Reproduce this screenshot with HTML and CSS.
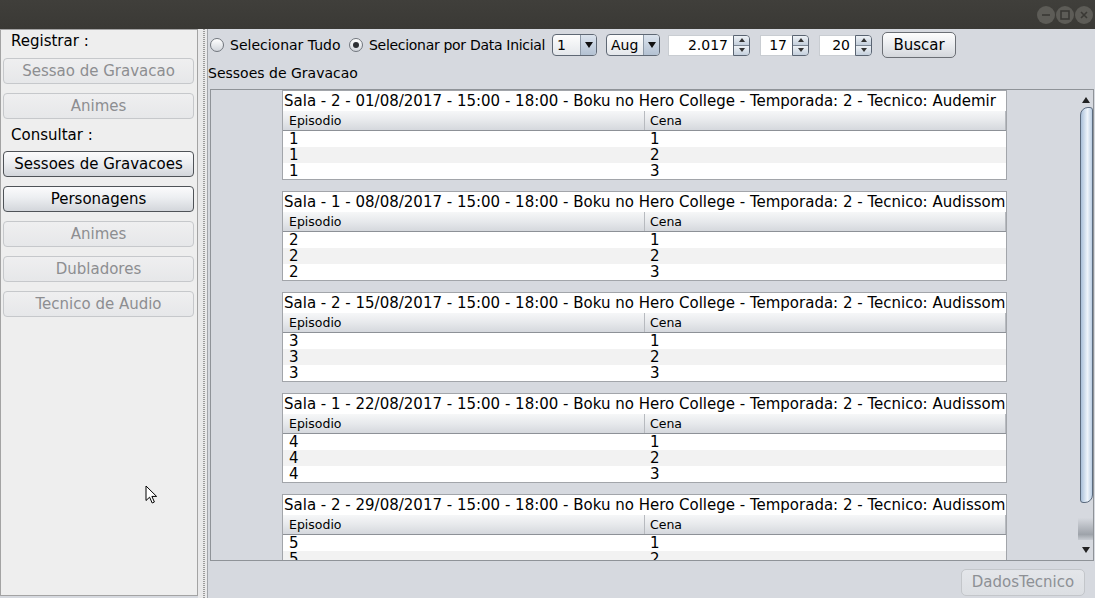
FILE: index.html
```html
<!DOCTYPE html>
<html>
<head>
<meta charset="utf-8">
<link rel="stylesheet" href="styles.css">
</head>
<body>
<div class="window">
  <div class="titlebar">
    <div class="wbtns">
      <span class="wbtn"><svg width="18" height="18" viewBox="0 0 18 18"><line x1="5" y1="9" x2="13" y2="9" stroke="#3a3935" stroke-width="1.6"/></svg></span>
      <span class="wbtn"><svg width="18" height="18" viewBox="0 0 18 18"><rect x="5" y="5" width="8" height="8" fill="none" stroke="#3a3935" stroke-width="1.6"/></svg></span>
      <span class="wbtn"><svg width="18" height="18" viewBox="0 0 18 18"><path d="M6 6 L12 12 M12 6 L6 12" stroke="#3a3935" stroke-width="1.6"/></svg></span>
    </div>
  </div>
  <div class="main">
    <div class="side">
      <div class="side-label lbl-top">Registrar :</div>
      <button class="sbtn dis first">Sessao de Gravacao</button>
      <button class="sbtn dis">Animes</button>
      <div class="side-label lbl-mid">Consultar :</div>
      <button class="sbtn en nogap">Sessoes de Gravacoes</button>
      <button class="sbtn en">Personagens</button>
      <button class="sbtn dis">Animes</button>
      <button class="sbtn dis">Dubladores</button>
      <button class="sbtn dis">Tecnico de Audio</button>
    </div>
    <div class="splitter"><div class="dots"></div></div>
    <div class="content">
      <div class="toolbar">
        <span class="radio"></span>
        <span class="rlabel w1">Selecionar Tudo</span>
        <span class="radio on"><span class="dot"></span></span>
        <span class="rlabel w2">Selecionar por Data Inicial</span>
        <span class="combo c1"><span class="cb-text">1</span><span class="cb-arrow"><svg width="8" height="6" viewBox="0 0 8 6"><path d="M0 0 H8 L4 6 Z" fill="#111"/></svg></span></span>
        <span class="combo c2"><span class="cb-text">Aug</span><span class="cb-arrow"><svg width="8" height="6" viewBox="0 0 8 6"><path d="M0 0 H8 L4 6 Z" fill="#111"/></svg></span></span>
        <span class="spinner s1"><span class="sp-field">2.017</span><span class="sp-btns"><span class="sp-up"><svg width="6" height="4" viewBox="0 0 6 4"><path d="M0 4 H6 L3 0 Z" fill="#333"/></svg></span><span class="sp-down"><svg width="6" height="4" viewBox="0 0 6 4"><path d="M0 0 H6 L3 4 Z" fill="#333"/></svg></span></span></span>
        <span class="spinner s2"><span class="sp-field">17</span><span class="sp-btns"><span class="sp-up"><svg width="6" height="4" viewBox="0 0 6 4"><path d="M0 4 H6 L3 0 Z" fill="#333"/></svg></span><span class="sp-down"><svg width="6" height="4" viewBox="0 0 6 4"><path d="M0 0 H6 L3 4 Z" fill="#333"/></svg></span></span></span>
        <span class="spinner s3"><span class="sp-field">20</span><span class="sp-btns"><span class="sp-up"><svg width="6" height="4" viewBox="0 0 6 4"><path d="M0 4 H6 L3 0 Z" fill="#333"/></svg></span><span class="sp-down"><svg width="6" height="4" viewBox="0 0 6 4"><path d="M0 0 H6 L3 4 Z" fill="#333"/></svg></span></span></span>
        <button class="tbtn">Buscar</button>
      </div>
      <div class="section-label">Sessoes de Gravacao</div>
      <div class="scrollpane">
        <div class="viewport">
          <div class="sessions">
            <div class="panel">
              <div class="ptitle">Sala - 2 - 01/08/2017 - 15:00 - 18:00 - Boku no Hero College - Temporada: 2 - Tecnico: Audemir</div>
              <div class="thead"><span class="th">Episodio</span><span class="th">Cena</span></div>
              <div class="tr"><span class="td">1</span><span class="td">1</span></div>
              <div class="tr alt"><span class="td">1</span><span class="td">2</span></div>
              <div class="tr"><span class="td">1</span><span class="td">3</span></div>
            </div>
            <div class="panel">
              <div class="ptitle">Sala - 1 - 08/08/2017 - 15:00 - 18:00 - Boku no Hero College - Temporada: 2 - Tecnico: Audissom</div>
              <div class="thead"><span class="th">Episodio</span><span class="th">Cena</span></div>
              <div class="tr"><span class="td">2</span><span class="td">1</span></div>
              <div class="tr alt"><span class="td">2</span><span class="td">2</span></div>
              <div class="tr"><span class="td">2</span><span class="td">3</span></div>
            </div>
            <div class="panel">
              <div class="ptitle">Sala - 2 - 15/08/2017 - 15:00 - 18:00 - Boku no Hero College - Temporada: 2 - Tecnico: Audissom</div>
              <div class="thead"><span class="th">Episodio</span><span class="th">Cena</span></div>
              <div class="tr"><span class="td">3</span><span class="td">1</span></div>
              <div class="tr alt"><span class="td">3</span><span class="td">2</span></div>
              <div class="tr"><span class="td">3</span><span class="td">3</span></div>
            </div>
            <div class="panel">
              <div class="ptitle">Sala - 1 - 22/08/2017 - 15:00 - 18:00 - Boku no Hero College - Temporada: 2 - Tecnico: Audissom</div>
              <div class="thead"><span class="th">Episodio</span><span class="th">Cena</span></div>
              <div class="tr"><span class="td">4</span><span class="td">1</span></div>
              <div class="tr alt"><span class="td">4</span><span class="td">2</span></div>
              <div class="tr"><span class="td">4</span><span class="td">3</span></div>
            </div>
            <div class="panel">
              <div class="ptitle">Sala - 2 - 29/08/2017 - 15:00 - 18:00 - Boku no Hero College - Temporada: 2 - Tecnico: Audissom</div>
              <div class="thead"><span class="th">Episodio</span><span class="th">Cena</span></div>
              <div class="tr"><span class="td">5</span><span class="td">1</span></div>
              <div class="tr alt"><span class="td">5</span><span class="td">2</span></div>
              <div class="tr"><span class="td">5</span><span class="td">3</span></div>
            </div>
          </div>
        </div>
        <div class="vscroll">
          <div class="sb-up"><svg width="8" height="6" viewBox="0 0 8 6"><path d="M0 6 H8 L4 0 Z" fill="#222"/></svg></div>
          <div class="sb-thumb"></div>
          <div class="sb-track"></div>
          <div class="sb-down"><svg width="8" height="6" viewBox="0 0 8 6"><path d="M0 0 H8 L4 6 Z" fill="#222"/></svg></div>
        </div>
      </div>
      <div class="bottom"><button class="dbtn">DadosTecnico</button></div>
    </div>
  </div>
  <svg class="cursor" width="14" height="20" viewBox="0 0 14 20"><path d="M1 1 L1 15.5 L4.6 12.2 L7.2 18 L9.4 17 L6.9 11.4 L11.6 11.4 Z" fill="#fff" stroke="#000" stroke-width="1" stroke-linejoin="miter"/></svg>
</div>
</body>
</html>
```
FILE: styles.css
```css
* { box-sizing: border-box; }
html, body { margin: 0; padding: 0; }
body {
  font-family: "DejaVu Sans", "Liberation Sans", sans-serif;
  font-size: 14px;
  color: #000;
  background: #d6d9df;
}
.window {
  width: 1095px;
  height: 598px;
  overflow: hidden;
  position: relative;
  display: flex;
  flex-direction: column;
}
.titlebar {
  height: 29px;
  flex: none;
  background: linear-gradient(#403f3b, #3a3935);
  display: flex;
  justify-content: flex-end;
  align-items: center;
  padding: 1px 2px 0 0;
}
.wbtns { display: flex; gap: 1px; }
.wbtn {
  width: 18px;
  height: 18px;
  border-radius: 50%;
  background: #5d5c57;
  display: flex;
}
.main {
  flex: 1;
  display: flex;
  min-height: 0;
}
.side {
  width: 198px;
  height: 567px;
  flex: none;
  border: 1px solid #a3a3a3;
  background: #eeeeee;
  display: flex;
  flex-direction: column;
  align-items: flex-start;
  font-size: 15px;
}
.side-label {
  padding-left: 10px;
  white-space: nowrap;
}
.lbl-top { height: 22px; line-height: 22px; }
.lbl-mid { height: 32px; line-height: 32px; }
.sbtn {
  font: inherit;
  margin: 9px 0 0 2px;
  width: 191px;
  height: 26px;
  border-radius: 4px;
  padding: 0;
  text-align: center;
  line-height: 24px;
  white-space: nowrap;
}
.sbtn.first { margin-top: 6px; }
.sbtn.nogap { margin-top: 0; }
.sbtn.en {
  border: 1px solid #4f5358;
  background: linear-gradient(#fbfbfc, #eceef1 45%, #d3d6db);
  color: #000;
}
.sbtn.dis {
  border: 1px solid #c6c8cb;
  background: linear-gradient(#efeff0, #e6e7e9);
  color: #8d8e91;
}
.splitter {
  width: 9px;
  flex: none;
  background: #e9e9ea;
}
.dots {
  width: 2px;
  height: 100%;
  margin-left: 5px;
  background-image: repeating-linear-gradient(#9b9b9b 0 1px, transparent 1px 2px);
}
.content {
  flex: 1;
  background: #d6d9df;
  border-left: 1px solid #a3a6ab;
  display: flex;
  flex-direction: column;
  min-width: 0;
}
.toolbar {
  display: flex;
  align-items: center;
  height: 26px;
  margin-top: 3px;
  padding-left: 2px;
  white-space: nowrap;
}
.radio {
  width: 14px;
  height: 14px;
  flex: none;
  border-radius: 50%;
  border: 1px solid #71767d;
  background: linear-gradient(#ffffff, #d2d6dc);
  margin-right: 6px;
  display: flex;
  align-items: center;
  justify-content: center;
}
.radio .dot {
  width: 6px;
  height: 6px;
  border-radius: 50%;
  background: #2c2f33;
}
.rlabel { flex: none; }
.w1 { width: 119px; }
.w2 { width: 183px; letter-spacing: -0.3px; }
.combo {
  flex: none;
  height: 22px;
  border: 1px solid #5f6874;
  border-radius: 4px;
  display: flex;
  overflow: hidden;
  background: linear-gradient(#fdfdfd, #e4e7eb);
}
.c1 { width: 45px; margin-right: 9px; }
.c2 { width: 54px; margin-right: 8px; }
.cb-text {
  flex: 1;
  padding-left: 4px;
  line-height: 20px;
}
.cb-arrow {
  width: 16px;
  flex: none;
  border-left: 1px solid #8d99a7;
  background: linear-gradient(#dce4ee, #b3c1d2);
  display: flex;
  align-items: center;
  justify-content: center;
}
.spinner {
  flex: none;
  height: 21px;
  display: flex;
  margin-right: 10px;
}
.s1 { width: 82px; }
.s2 { width: 49px; }
.s3 { width: 53px; }
.sp-field {
  flex: 1;
  background: #ffffff;
  border: 1px solid #c9cdd2;
  border-right: none;
  text-align: right;
  padding-right: 5px;
  line-height: 19px;
}
.sp-btns {
  width: 17px;
  flex: none;
  display: flex;
  flex-direction: column;
  border: 1px solid #5a6472;
  border-radius: 0 4px 4px 0;
  overflow: hidden;
}
.sp-up, .sp-down {
  flex: 1;
  display: flex;
  align-items: center;
  justify-content: center;
  background: linear-gradient(#eef2f6, #c4cfdc);
}
.sp-up { border-bottom: 1px solid #7c8795; }
.tbtn {
  font: inherit;
  font-size: 15px;
  flex: none;
  width: 74px;
  height: 26px;
  padding: 0;
  border: 1px solid #6b6f75;
  border-radius: 5px;
  background: linear-gradient(#fdfdfd, #eceef1 45%, #d4d7dc);
  color: #000;
  line-height: 24px;
}
.section-label {
  height: 31px;
  line-height: 30px;
  white-space: nowrap;
}
.scrollpane {
  margin-left: 2px;
  width: 884px;
  height: 472px;
  flex: none;
  border: 1px solid #8f9398;
  display: flex;
}
.viewport {
  flex: 1;
  overflow: hidden;
}
.sessions {
  display: flex;
  flex-direction: column;
  align-items: center;
  gap: 11px;
}
.panel {
  width: 725px;
  flex: none;
  border: 1px solid #a2a5aa;
  background: #ffffff;
}
.ptitle {
  height: 20px;
  line-height: 20px;
  padding-left: 1px;
  font-size: 15px;
  white-space: nowrap;
  overflow: hidden;
}
.thead, .tr {
  display: grid;
  grid-template-columns: 362px 1fr;
}
.thead {
  height: 20px;
  border-bottom: 1px solid #8d9197;
  background: linear-gradient(#f6f7f8, #e7e9ec 50%, #d5d8dd);
}
.th {
  font-size: 12.5px;
  line-height: 19px;
  padding-left: 6px;
  border-right: 1px solid #b7babf;
}
.th + .th { padding-left: 5px; }
.tr {
  height: 16px;
  line-height: 16px;
  font-size: 15px;
  background: #ffffff;
}
.tr.alt { background: #f2f2f2; }
.td { padding-left: 6px; }
.td + .td { padding-left: 5px; }
.vscroll {
  width: 15px;
  flex: none;
  display: flex;
  flex-direction: column;
  background: #d6d9df;
}
.sb-up {
  height: 17px;
  display: flex;
  align-items: center;
  justify-content: center;
  padding-top: 2px;
}
.sb-thumb {
  height: 396px;
  margin-left: 2px;
  border: 1px solid #5c6b7e;
  border-radius: 8px 3px 8px 3px;
  background: linear-gradient(to right, #a9bfd8, #dfe9f4 45%, #eef4fa 60%, #b9cce2);
}
.sb-track {
  flex: 1;
  background: linear-gradient(#d6d9df 40%, #9ea3aa 85%, #c8ccd2);
}
.sb-down {
  height: 20px;
  display: flex;
  align-items: center;
  justify-content: center;
}
.bottom {
  flex: 1;
  display: flex;
  justify-content: flex-end;
  align-items: flex-start;
  padding: 8px 10px 0 0;
}
.dbtn {
  font: inherit;
  font-size: 15px;
  width: 124px;
  height: 27px;
  padding: 0;
  border: 1px solid #c3c6ca;
  border-radius: 5px;
  background: linear-gradient(#e4e6ea, #dcdfe3);
  color: #8d9095;
  line-height: 25px;
}
.cursor {
  position: absolute;
  left: 145px;
  top: 485px;
}
```
